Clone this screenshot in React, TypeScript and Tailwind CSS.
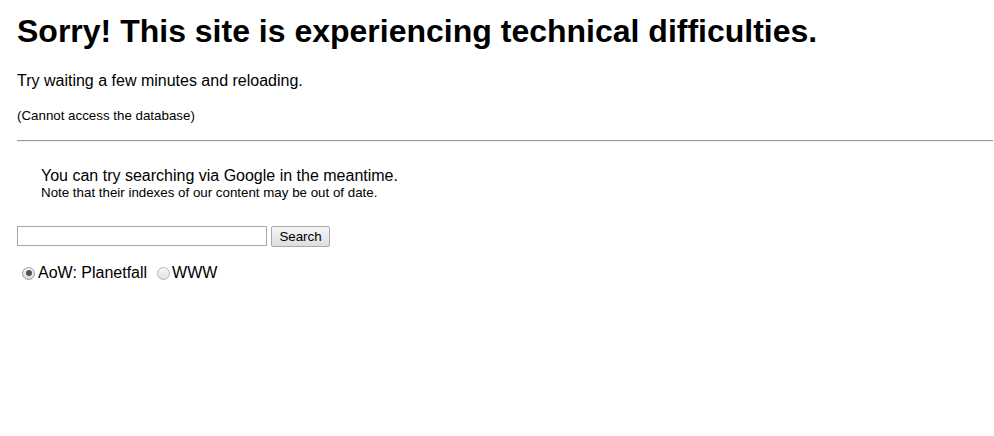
export default function App() {
  return (
    <div className="min-h-screen bg-white pl-[17px] text-black" style={{ fontFamily: '"Liberation Sans", Arial, sans-serif' }}>
      <h1 className="pt-[13px] text-[32px] font-bold leading-[37px]">
        Sorry! This site is experiencing technical difficulties.
      </h1>
      <p className="mt-[21px] text-[16px] leading-[20px]">Try waiting a few minutes and reloading.</p>
      <p className="mt-[17px] text-[13.33px] leading-[15px]">(Cannot access the database)</p>
      <hr className="mr-px mt-[17px] h-[2px] border-0 border-t border-t-[#9a9a9a] bg-[#eeeeee]" />

      <div className="mt-[24px] pl-[24px]">
        <div className="text-[16px] leading-[19px]">You can try searching via Google in the meantime.</div>
        <div className="text-[13.33px] leading-[16px]">Note that their indexes of our content may be out of date.</div>
      </div>

      <form className="mt-[25px]" onSubmit={(e) => e.preventDefault()}>
        <div className="flex items-start gap-[4px]">
          <input
            type="text"
            className="h-[20px] w-[250px] border border-[#a9a9a9] bg-white px-[2px] text-[13.33px] outline-none"
          />
          <button
            type="submit"
            className="h-[21px] w-[59px] rounded-[2px] border border-[#a9a9a9] bg-gradient-to-b from-[#f6f6f6] to-[#dedede] text-[13.33px] leading-[19px] text-black"
          >
            Search
          </button>
        </div>
        <div className="mt-[17px] flex items-center text-[16px] leading-[18px]">
          <label className="flex items-center">
            <span className="ml-[5px] mr-[3px] flex h-[13px] w-[13px] items-center justify-center rounded-full border border-[#9a9a9a] bg-gradient-to-b from-[#f4f4f4] to-[#dcdcdc]">
              <span className="h-[6px] w-[6px] rounded-full bg-[#555555]" />
            </span>
            AoW: Planetfall
          </label>
          <label className="ml-[10px] flex items-center">
            <span className="mr-[2px] h-[13px] w-[13px] rounded-full border border-[#b4b4b4] bg-gradient-to-b from-[#f8f8f8] to-[#e2e2e2]" />
            WWW
          </label>
        </div>
      </form>
    </div>
  );
}
